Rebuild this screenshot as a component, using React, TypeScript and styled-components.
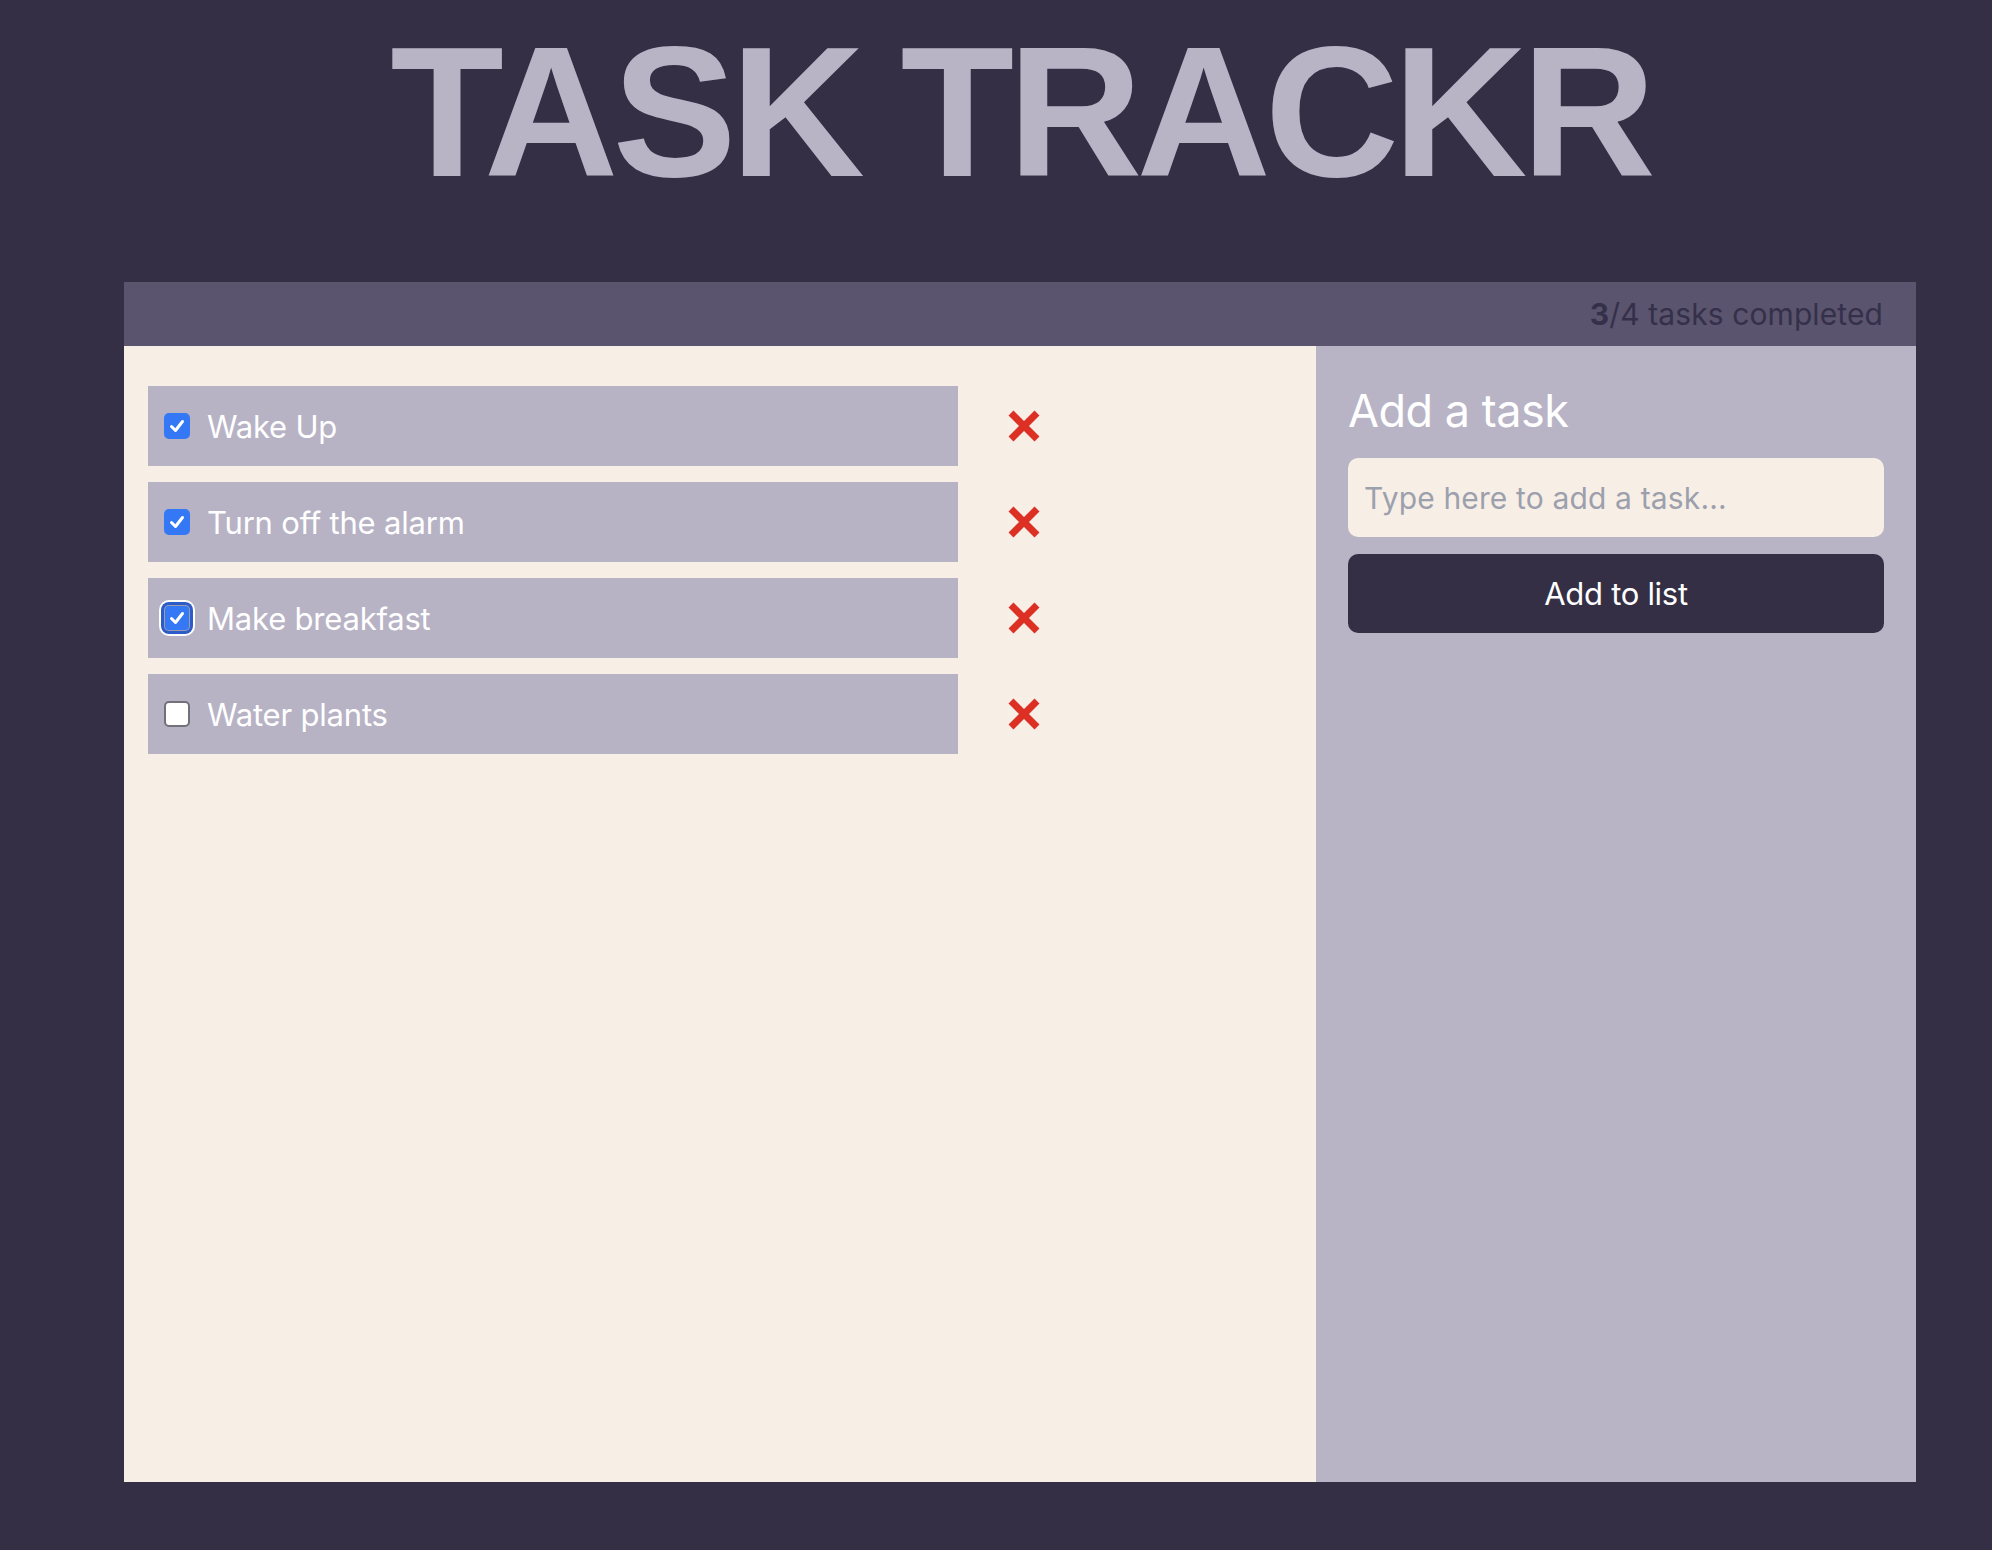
import React from "react";
import styled, { createGlobalStyle, css } from "styled-components";

const GlobalStyle = createGlobalStyle`
  html, body {
    margin: 0;
    padding: 0;
    background: #342f45;
  }
  body {
    font-family: Inter, "Noto Sans", sans-serif;
  }
  * { box-sizing: border-box; }
`;

const Page = styled.div`
  min-height: 1550px;
  background: #342f45;
  padding-top: 17px;
  padding-left: 124px;
  width: 1992px;
`;

const Title = styled.h1`
  margin: 0 0 75px 0;
  width: 1792px;
  text-align: center;
  font-family: "Liberation Sans", Arial, sans-serif;
  font-weight: 700;
  font-size: 186px;
  line-height: 190px;
  letter-spacing: -6px;
  word-spacing: -4px;
  color: #b8b4c6;
`;

const Panel = styled.section`
  width: 1792px;
  display: flex;
  flex-direction: column;
`;

const StatusBar = styled.header`
  height: 64px;
  background: #5a546e;
  display: flex;
  align-items: center;
  justify-content: flex-end;
  padding-right: 33px;
  font-size: 30px;
  letter-spacing: 0.1px;
  color: #35304a;
`;

const Body = styled.div`
  display: flex;
  height: 1136px;
`;

const ListArea = styled.div`
  width: 1192px;
  background: #f7efe6;
  padding: 40px 24px;
  display: flex;
  flex-direction: column;
  gap: 16px;
`;

const TaskLine = styled.div`
  display: flex;
  align-items: center;
  gap: 50px;
`;

const TaskRow = styled.label`
  width: 810px;
  height: 80px;
  background: #b7b3c5;
  display: flex;
  align-items: center;
  padding-left: 16px;
  gap: 17px;
  font-size: 31px;
  letter-spacing: -0.2px;
  color: #ffffff;
`;

const Box = styled.span<{ $checked: boolean; $focused?: boolean }>`
  width: 26px;
  height: 26px;
  border-radius: 5px;
  display: flex;
  align-items: center;
  justify-content: center;
  flex-shrink: 0;
  ${(p) =>
    p.$checked
      ? css`
          background: #3478f6;
        `
      : css`
          background: #ffffff;
          border: 2px solid #727079;
        `}
  ${(p) =>
    p.$focused &&
    css`
      box-shadow: inset 0 0 0 1px #9c9cae, 0 0 0 3px #2d5cc9, 0 0 0 5px #ffffff;
    `}
`;

const DeleteButton = styled.button`
  border: none;
  background: none;
  padding: 0;
  width: 32px;
  height: 32px;
  display: flex;
  cursor: pointer;
`;

const SidePanel = styled.aside`
  width: 600px;
  background: #b8b4c6;
  padding: 37px 32px;
  display: flex;
  flex-direction: column;
`;

const SideTitle = styled.h2`
  margin: 0 0 19px 0;
  font-size: 45px;
  font-weight: 400;
  line-height: 56px;
  color: #ffffff;
  letter-spacing: -0.5px;
`;

const TaskInput = styled.input`
  height: 79px;
  border: none;
  border-radius: 10px;
  background: #f7efe6;
  padding: 0 16px;
  font-family: Inter, sans-serif;
  font-size: 30px;
  letter-spacing: 0.15px;
  color: #35304a;
  outline: none;
  &::placeholder {
    color: #9ca0ad;
  }
`;

const AddButton = styled.button`
  margin-top: 17px;
  height: 79px;
  border: none;
  border-radius: 10px;
  background: #342f45;
  color: #ffffff;
  font-family: Inter, sans-serif;
  font-size: 31px;
  letter-spacing: -0.3px;
  cursor: pointer;
`;

const Check = () => (
  <svg width="18" height="18" viewBox="0 0 18 18">
    <path d="M3.5 9.5 L7.5 13.5 L14.5 4.5" fill="none" stroke="#fff" strokeWidth="3" strokeLinecap="round" strokeLinejoin="round" />
  </svg>
);

const Cross = () => (
  <svg width="32" height="32" viewBox="0 0 32 32">
    <path d="M3 3 L29 29 M29 3 L3 29" stroke="#dc3024" strokeWidth="7" strokeLinecap="butt" />
  </svg>
);

const tasks = [
  { text: "Wake Up", done: true },
  { text: "Turn off the alarm", done: true },
  { text: "Make breakfast", done: true, focused: true },
  { text: "Water plants", done: false },
];

export default function App() {
  const done = tasks.filter((t) => t.done).length;
  return (
    <>
      <GlobalStyle />
      <Page>
        <Title>TASK TRACKR</Title>
        <Panel>
          <StatusBar>
            <span>
              <b>{done}</b>/{tasks.length} tasks completed
            </span>
          </StatusBar>
          <Body>
            <ListArea>
              {tasks.map((t) => (
                <TaskLine key={t.text}>
                  <TaskRow>
                    <Box $checked={t.done} $focused={t.focused}>
                      {t.done && <Check />}
                    </Box>
                    {t.text}
                  </TaskRow>
                  <DeleteButton aria-label="Delete task">
                    <Cross />
                  </DeleteButton>
                </TaskLine>
              ))}
            </ListArea>
            <SidePanel>
              <SideTitle>Add a task</SideTitle>
              <TaskInput placeholder="Type here to add a task..." />
              <AddButton>Add to list</AddButton>
            </SidePanel>
          </Body>
        </Panel>
      </Page>
    </>
  );
}
